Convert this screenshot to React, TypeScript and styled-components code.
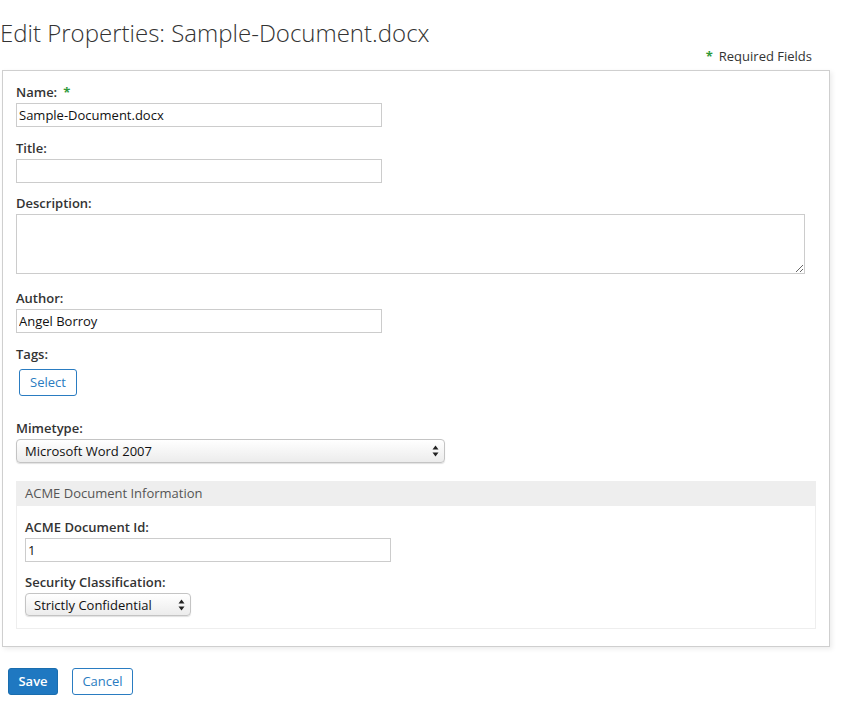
import React from "react";
import styled, { createGlobalStyle } from "styled-components";

const Global = createGlobalStyle`
  html, body { margin: 0; padding: 0; background: #fff; }
  body { font-family: "Open Sans", "Liberation Sans", sans-serif; font-size: 13px; color: #333; }
  * { box-sizing: border-box; }
`;

const Page = styled.div`
  display: flex;
  flex-direction: column;
  width: 846px;
  padding-bottom: 19px;
`;

const Heading = styled.h1`
  margin: 16px 0 0 0;
  font-size: 24px;
  line-height: 33px;
  font-weight: 300;
  color: #333;
`;

const RequiredNote = styled.div`
  align-self: flex-end;
  margin: -2px 34px 5px 0;
  font-size: 13px;
  line-height: 18px;
  color: #333;
  display: flex;
  gap: 6px;
`;

const Star = styled.span`
  color: #2f9a3a;
  font-weight: 700;
`;

const Panel = styled.form`
  margin-left: 2px;
  width: 828px;
  border: 1px solid #cfcfcf;
  box-shadow: 2px 2px 5px rgba(0, 0, 0, 0.08);
  padding: 12px 13px 17px 13px;
  display: flex;
  flex-direction: column;
`;

const Field = styled.div<{ $mb?: number }>`
  display: flex;
  flex-direction: column;
  align-items: flex-start;
  margin-bottom: ${(p) => (p.$mb ?? 11.5)}px;
`;

const Label = styled.label`
  font-weight: 600;
  font-size: 13px;
  line-height: 18px;
  color: #333;
  margin-bottom: 2px;
  display: flex;
  gap: 6px;
`;

const TextInput = styled.input<{ $w?: number }>`
  display: block;
  width: ${(p) => p.$w ?? 366}px;
  height: 24px;
  border: 1px solid #ccc;
  padding: 0 2px;
  font-family: "Open Sans", "Liberation Sans", sans-serif;
  font-size: 13px;
  color: #111;
  outline: none;
  border-radius: 0;
`;

const TextArea = styled.textarea`
  display: block;
  width: 789px;
  height: 60px;
  border: 1px solid #ccc;
  padding: 2px;
  font-family: "Open Sans", "Liberation Sans", sans-serif;
  font-size: 13px;
  outline: none;
  border-radius: 0;
`;

const OutlineButton = styled.button`
  height: 28px;
  padding: 0 12px;
  background: #fff;
  border: 1px solid #2a7cc1;
  border-radius: 3px;
  color: #2a7cc1;
  font-family: "Open Sans", "Liberation Sans", sans-serif;
  font-size: 13px;
  cursor: pointer;
`;

const TagButton = styled(OutlineButton)`
  margin: 4px 0 0 3px;
  width: 58px;
  height: 27px;
  padding: 0;
`;

const SelectWrap = styled.div<{ $w: number }>`
  position: relative;
  width: ${(p) => p.$w}px;
`;

const Select = styled.select<{ $h: number }>`
  display: block;
  appearance: none;
  -webkit-appearance: none;
  width: 100%;
  height: ${(p) => p.$h}px;
  border: 1px solid #c4c4c4;
  border-radius: 4px;
  background: linear-gradient(#ffffff, #ececec);
  box-shadow: 0 1px 1px rgba(0, 0, 0, 0.12);
  padding: 0 20px 0 8px;
  font-family: "Open Sans", "Liberation Sans", sans-serif;
  font-size: 13px;
  color: #111;
  outline: none;
`;

const SelectArrows = styled.svg`
  position: absolute;
  right: 6px;
  top: 50%;
  transform: translateY(-50%);
  pointer-events: none;
`;

const Section = styled.section`
  margin-top: 6px;
  width: 800px;
  display: flex;
  flex-direction: column;
`;

const SectionHeader = styled.div`
  height: 25px;
  background: #eeeeee;
  padding: 0 9px;
  display: flex;
  align-items: center;
  font-size: 13px;
  color: #555;
`;

const SectionBody = styled.div`
  border: 1px solid #eeeeee;
  border-top: none;
  padding: 12px 8px 0 8px;
`;

const Actions = styled.div`
  margin: 21px 0 0 8px;
  display: flex;
  gap: 14px;
`;

const PrimaryButton = styled.button`
  height: 27px;
  width: 50px;
  background: #1f78c1;
  border: 1px solid #1a6dae;
  border-radius: 3px;
  color: #fff;
  font-family: "Open Sans", "Liberation Sans", sans-serif;
  font-weight: 600;
  font-size: 13px;
  cursor: pointer;
`;

const CancelButton = styled(OutlineButton)`
  height: 27px;
  width: 61px;
  padding: 0;
`;

const Arrows = () => (
  <SelectArrows width="7" height="12" viewBox="0 0 7 12">
    <path d="M3.5 0.5 L6.5 4.5 L0.5 4.5 Z" fill="#222" />
    <path d="M3.5 11.5 L6.5 7.5 L0.5 7.5 Z" fill="#222" />
  </SelectArrows>
);

export default function App() {
  return (
    <>
      <Global />
      <Page>
        <Heading>Edit Properties: Sample-Document.docx</Heading>
        <RequiredNote>
          <Star>*</Star>
          <span>Required Fields</span>
        </RequiredNote>
        <Panel onSubmit={(e) => e.preventDefault()}>
          <Field>
            <Label>
              Name: <Star>*</Star>
            </Label>
            <TextInput defaultValue="Sample-Document.docx" />
          </Field>
          <Field>
            <Label>Title:</Label>
            <TextInput defaultValue="" />
          </Field>
          <Field $mb={15}>
            <Label>Description:</Label>
            <TextArea />
          </Field>
          <Field>
            <Label>Author:</Label>
            <TextInput defaultValue="Angel Borroy" />
          </Field>
          <Field $mb={23}>
            <Label>Tags:</Label>
            <TagButton type="button">Select</TagButton>
          </Field>
          <Field $mb={12}>
            <Label>Mimetype:</Label>
            <SelectWrap $w={429}>
              <Select $h={24} defaultValue="word">
                <option value="word">Microsoft Word 2007</option>
              </Select>
              <Arrows />
            </SelectWrap>
          </Field>
          <Section>
            <SectionHeader>ACME Document Information</SectionHeader>
            <SectionBody>
              <Field>
                <Label>ACME Document Id:</Label>
                <TextInput defaultValue="1" />
              </Field>
              <Field>
                <Label>Security Classification:</Label>
                <SelectWrap $w={166}>
                  <Select $h={23} defaultValue="sc">
                    <option value="sc">Strictly Confidential</option>
                  </Select>
                  <Arrows />
                </SelectWrap>
              </Field>
            </SectionBody>
          </Section>
        </Panel>
        <Actions>
          <PrimaryButton type="button">Save</PrimaryButton>
          <CancelButton type="button">Cancel</CancelButton>
        </Actions>
      </Page>
    </>
  );
}
